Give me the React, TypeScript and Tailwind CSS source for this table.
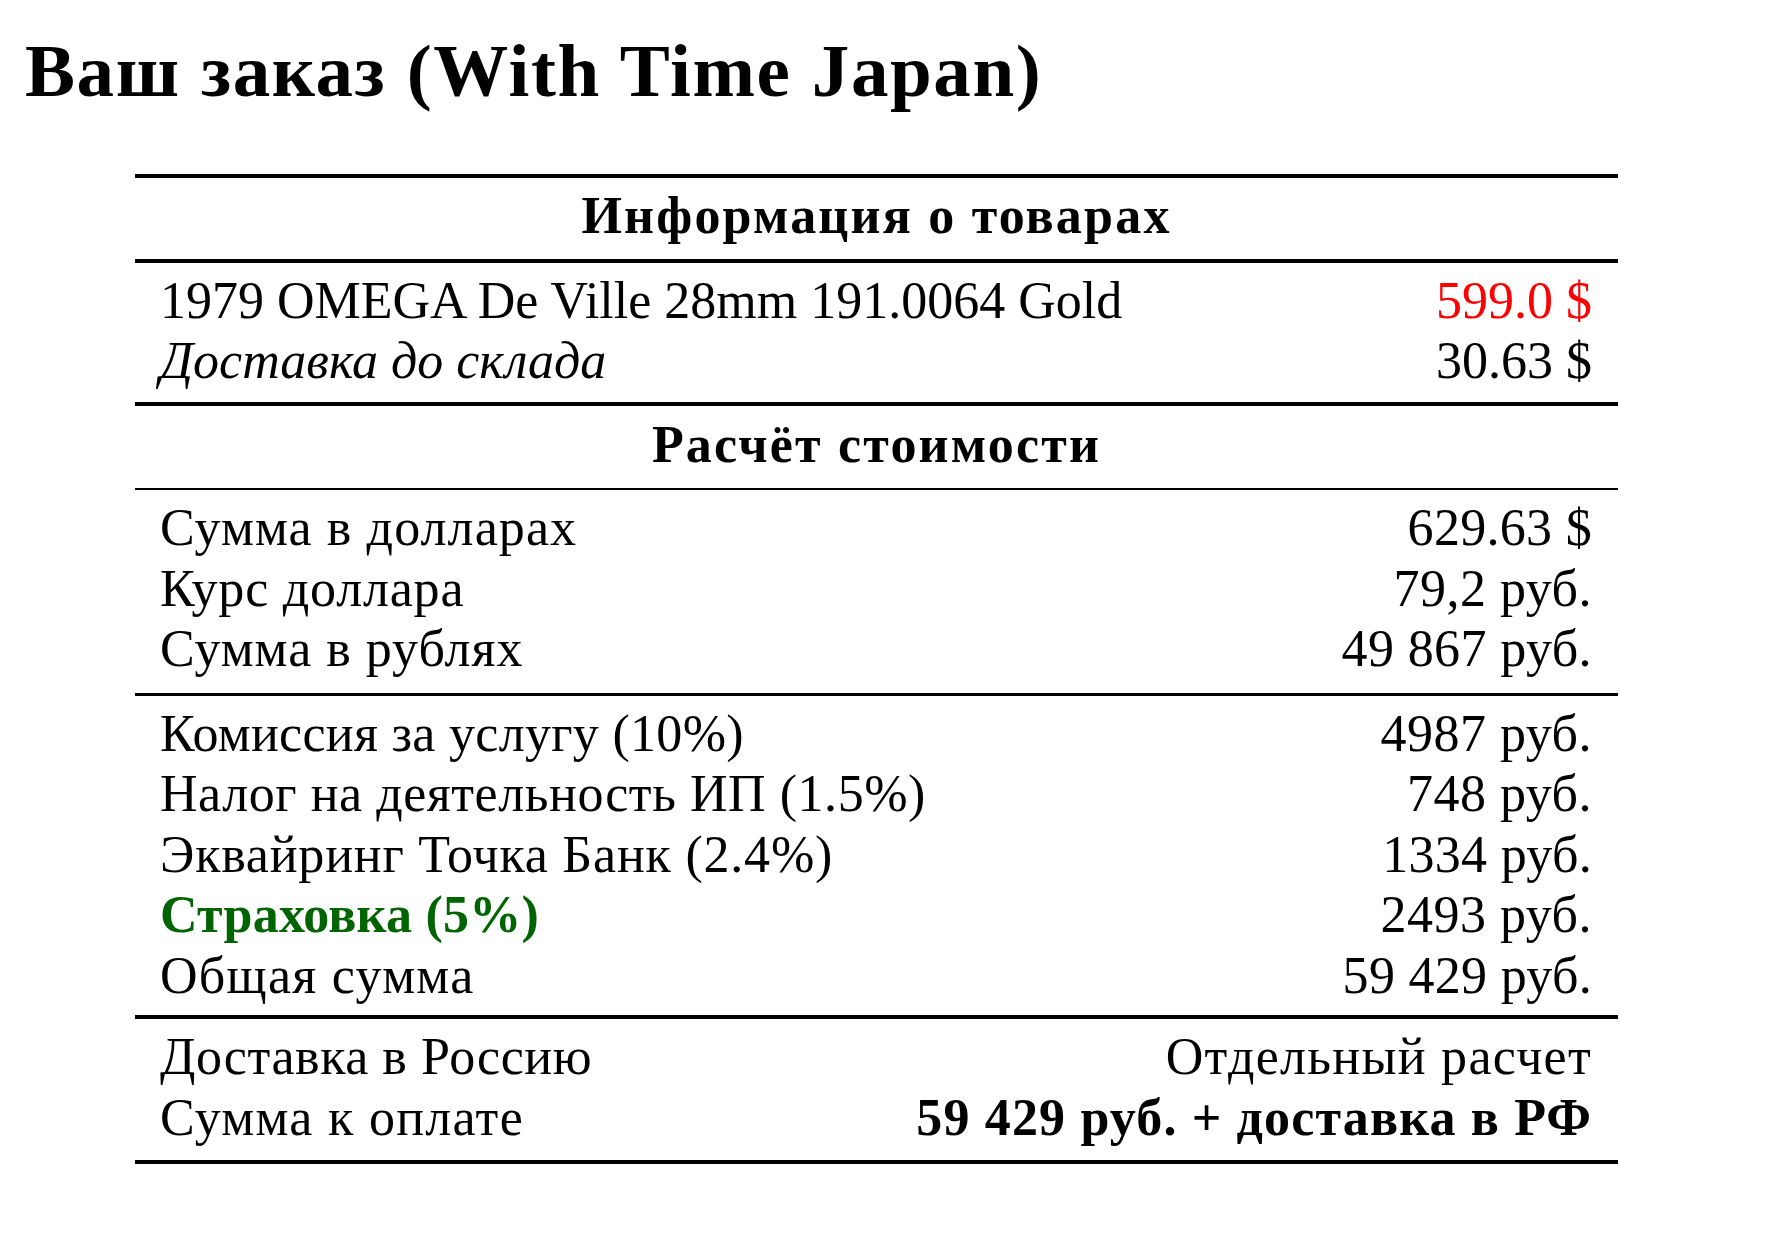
import React from "react";

type Row = { l: React.ReactNode; r: React.ReactNode; lt?: string; rt?: string };

function Section({ rows, border, pb = "pb-[12px]" }: { rows: Row[]; border: string; pb?: string }) {
  return (
    <div className={`${border} border-black pt-[8px] ${pb} pl-[25px] pr-[26px]`}>
      {rows.map((row, i) => (
        <div key={i} className="flex justify-between leading-[60.5px]">
          <span className={row.lt ?? ""}>{row.l}</span>
          <span className={`text-right ${row.rt ?? ""}`}>{row.r}</span>
        </div>
      ))}
    </div>
  );
}

function Header({ text, border, pad }: { text: string; border: string; pad: string }) {
  return (
    <div className={`${border} ${pad} border-black text-center font-bold leading-[60.5px] tracking-[2.2px]`}>
      {text}
    </div>
  );
}

export default function App() {
  return (
    <div
      className="min-h-[1250px] w-[1775px] bg-white text-black"
      style={{ fontFamily: '"Liberation Serif", "Times New Roman", serif' }}
    >
      <h1 className="pl-[25px] pt-[28px] text-[75px] font-bold leading-[86px] tracking-[1.6px]">
        Ваш заказ (With Time Japan)
      </h1>
      <div className="ml-[135px] mt-[60px] w-[1483px] border-b-[4px] border-black text-[52px]">
        <Header text="Информация о товарах" border="border-t-[4px]" pad="pt-[8px] pb-[12px]" />
        <Section
          border="border-t-[4px]"
          pb="pb-[10px]"
          rows={[
            {
              l: "1979 OMEGA De Ville 28mm 191.0064 Gold",
              r: <span className="text-[#ff0000]">599.0 $</span>,
            },
            { l: <span className="italic">Доставка до склада</span>, r: "30.63 $" },
          ]}
        />
        <Header text="Расчёт стоимости" border="border-t-[4px]" pad="pt-[9px] pb-[13px]" />
        <Section
          border="border-t-[2px]"
          pb="pb-[13px]"
          rows={[
            { l: "Сумма в долларах", r: "629.63 $", lt: "tracking-[1.1px]", rt: "tracking-[0.3px]" },
            { l: "Курс доллара", r: "79,2 руб.", lt: "tracking-[0.8px]", rt: "tracking-[0.5px]" },
            { l: "Сумма в рублях", r: "49 867 руб.", lt: "tracking-[1px]", rt: "tracking-[0.4px]" },
          ]}
        />
        <Section
          border="border-t-[3px]"
          pb="pb-[9px]"
          rows={[
            { l: "Комиссия за услугу (10%)", r: "4987 руб.", lt: "tracking-[0.3px]", rt: "tracking-[0.5px]" },
            { l: "Налог на деятельность ИП (1.5%)", r: "748 руб.", lt: "tracking-[0.55px]", rt: "tracking-[0.5px]" },
            { l: "Эквайринг Точка Банк (2.4%)", r: "1334 руб.", lt: "tracking-[0.8px]", rt: "tracking-[0.3px]" },
            {
              l: <span className="font-bold text-[#006400]">Страховка (5%)</span>,
              r: "2493 руб.",
              lt: "tracking-[0.25px]",
              rt: "tracking-[0.5px]",
            },
            { l: "Общая сумма", r: "59 429 руб.", lt: "tracking-[1.3px]", rt: "tracking-[0.3px]" },
          ]}
        />
        <Section
          border="border-t-[4px]"
          rows={[
            { l: "Доставка в Россию", r: "Отдельный расчет", lt: "tracking-[0.55px]", rt: "tracking-[1.3px]" },
            {
              l: "Сумма к оплате",
              r: <span className="font-bold">59 429 руб. + доставка в РФ</span>,
              lt: "tracking-[1.3px]",
              rt: "tracking-[1.15px]",
            },
          ]}
        />
      </div>
    </div>
  );
}
